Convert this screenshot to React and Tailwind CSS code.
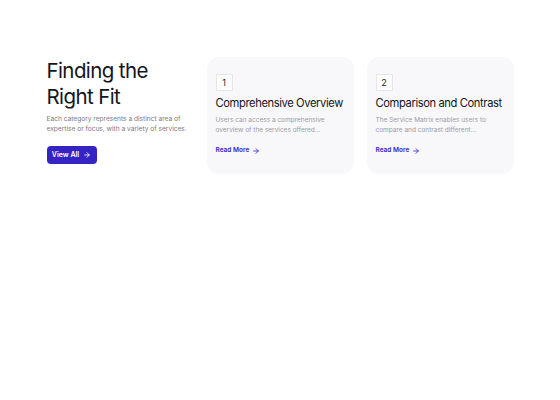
import { ArrowRight } from "lucide-react";

const cards = [
  {
    n: 1,
    title: "Comprehensive Overview",
    text: "Users can access a comprehensive overview of the services offered...",
  },
  {
    n: 2,
    title: "Comparison and Contrast",
    text: "The Service Matrix enables users to compare and contrast different...",
  },
];

export default function App() {
  return (
    <div
      className="min-h-[400px] bg-white pt-[57px]"
      style={{ fontFamily: "Inter, 'Noto Sans', sans-serif" }}
    >
      <div className="mx-auto grid w-[467px] grid-cols-3 gap-[13px]">
        <div className="pt-[1px]">
          <h2 className="text-[20.5px] leading-[26px] tracking-[-0.6px] text-[#14141c]">
            Finding the Right Fit
          </h2>
          <p className="mt-[4px] text-[6.6px] leading-[10px] text-[#7a7a85]">
            Each category represents a distinct area of expertise or focus, with a variety of services.
          </p>
          <button className="mt-[12px] flex h-[18px] w-[50px] items-center justify-center gap-[4px] rounded-[4px] bg-[#3424c4] text-[7px] font-semibold text-white">
            View All
            <ArrowRight size={8} strokeWidth={2.5} />
          </button>
        </div>
        {cards.map((c) => (
          <div
            key={c.n}
            className="h-[117px] rounded-[12px] bg-[#f8f8fa] px-[9px] pt-[17px]"
          >
            <div className="flex h-[17px] w-[17px] items-center justify-center border border-[#e6e6ea] bg-white text-[9px] text-[#222]">
              {c.n}
            </div>
            <h3 className="mt-[4px] whitespace-nowrap text-[11.2px] leading-[16px] tracking-[-0.4px] text-[#14141c]">
              {c.title}
            </h3>
            <p className="mt-[4px] text-[6.5px] leading-[10px] text-[#9a9aa3]">
              {c.text}
            </p>
            <div className="mt-[11px] flex items-center gap-[3px] text-[6.5px] font-semibold text-[#3424c4]">
              Read More
              <ArrowRight size={8} strokeWidth={2.5} />
            </div>
          </div>
        ))}
      </div>
    </div>
  );
}
